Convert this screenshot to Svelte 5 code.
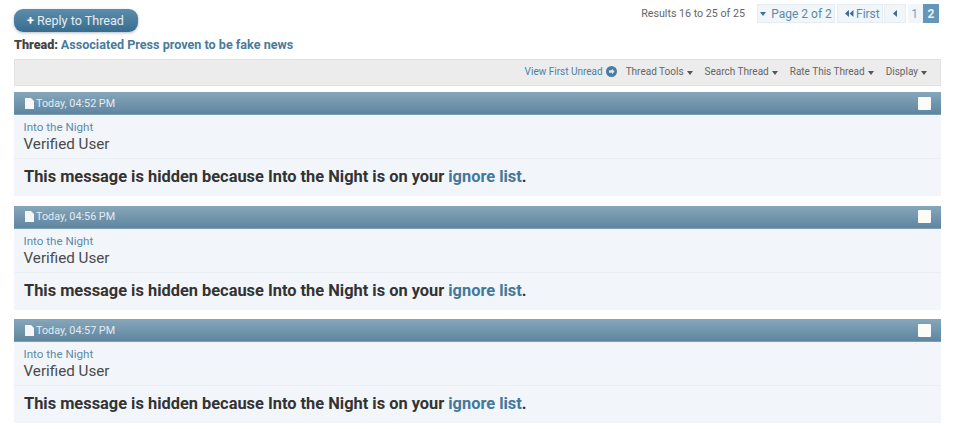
<script>
  const posts = ['Today, 04:52 PM', 'Today, 04:56 PM', 'Today, 04:57 PM'];
  const tools = ['Thread Tools', 'Search Thread', 'Rate This Thread', 'Display'];
</script>

<div class="page">
  <div class="top">
    <button class="reply"><b>+</b> Reply to Thread</button>
    <div class="pager">
      <span class="results">Results 16 to 25 of 25</span>
      <span class="pg wide"><i class="tri-d"></i>Page 2 of 2</span>
      <span class="pg first"><svg width="9" height="7" viewBox="0 0 9 7"><path d="M4 0v7L0 3.500zM8.500 0v7L4.500 3.500z" fill="#3e6f90"/></svg>First</span>
      <span class="pg prev"><svg width="4" height="7" viewBox="0 0 4 7"><path d="M4 0v7L0 3.500z" fill="#3e6f90"/></svg></span>
      <span class="pg num">1</span>
      <span class="pg cur">2</span>
    </div>
  </div>

  <div class="title"><b>Thread:</b> <a href="#t">Associated Press proven to be fake news</a></div>

  <div class="toolbar">
    <a class="unread" href="#u">View First Unread</a>
    <svg class="go" width="11" height="11" viewBox="0 0 11 11"><circle cx="5.500" cy="5.500" r="5.500" fill="#4a7da0"/><path d="M3 4.200h3V2.800l2.500 2.700L6 8.200V6.800H3z" fill="#dfe9f0"/></svg>
    {#each tools as t}
      <span class="tool">{t}<i class="tri-t"></i></span>
    {/each}
  </div>

  {#each posts as p}
    <section class="post">
      <header class="head">
        <svg width="9" height="11" viewBox="0 0 9 11"><path d="M0 0h6l3 3v8H0z" fill="#f4f6f8"/></svg>
        <span>{p}</span>
        <i class="check"></i>
      </header>
      <div class="user">
        <a href="#n">Into the Night</a>
        <div class="rank">Verified User</div>
      </div>
      <div class="msg">This message is hidden because Into the Night is on your <a href="#i">ignore list</a>.</div>
    </section>
  {/each}
</div>

<style>
  :global(body) { margin: 0; background: #fff; }
  .page {
    font-family: Roboto, "Liberation Sans", sans-serif;
    width: 927px;
    height: 429px;
    overflow: hidden;
    padding: 9px 14px 0;
    color: #333;
  }
  a { color: #3e7396; text-decoration: none; }
  .top { display: flex; justify-content: space-between; align-items: flex-start; height: 24px; }
  .reply {
    width: 124px;
    height: 23px;
    border: 0;
    border-radius: 9px;
    background: linear-gradient(#5d8cab 0%, #386d90 100%);
    box-shadow: 0 1px 3px rgba(60, 90, 110, .4);
    color: #e4edf3;
    font: 12.600px Roboto, sans-serif;
    padding: 0 1px 0 0;
  }
  .reply b { font-weight: 700; color: #fff; }
  .pager { display: flex; align-items: center; gap: 2px; height: 19px; margin-top: -5px; margin-right: 2px; }
  .results { font-size: 10.700px; color: #666; margin-right: 10px; }
  .pg {
    height: 19px;
    display: flex;
    align-items: center;
    justify-content: center;
    box-sizing: border-box;
    background: #f1f6fa;
    border: 1px solid #e5edf3;
    color: #5c8aa8;
    font-size: 12px;
  }
  .wide { width: 78px; gap: 5px; }
  .tri-d { width: 0; height: 0; border: 3.500px solid transparent; border-top: 4px solid #3e6f90; border-bottom: 0; }
  .first { width: 46px; gap: 2px; justify-content: flex-start; padding-left: 7px; }
  .prev { width: 22px; margin-left: -1px; }
  .num { width: 15px; border: 0; color: #7fa3bb; padding-right: 2px; }
  .cur { width: 16px; margin-left: -2px; border: 0; background: #6496b8; color: #e8f1f6; font-weight: 700; }
  .title { font-size: 12.600px; font-weight: 700; line-height: 14px; margin-top: 5px; height: 14px; color: #444; word-spacing: -0.500px; }
  .title a { color: #4a7b9b; word-spacing: 0; }
  .toolbar {
    display: flex;
    align-items: center;
    justify-content: flex-end;
    box-sizing: border-box;
    height: 27px;
    margin-top: 7px;
    padding: 0 13px 2px 0;
    background: #ececec;
    border: 1px solid #e2e2e2;
    font-size: 10px;
    color: #666;
  }
  .unread { color: #4e80a2; }
  .go { margin-left: 3px; margin-right: 9px; }
  .tool { margin-left: 12px; display: flex; align-items: center; }
  .go + .tool { margin-left: 0; }
  .tri-t { width: 0; height: 0; margin: 2px 0 0 3px; border: 3.500px solid transparent; border-top: 4px solid #555; border-bottom: 0; }
  .post { margin-top: 6px; height: 104px; margin-bottom: 9.500px; background: #f2f6fa; }
  .head {
    height: 23px;
    display: flex;
    align-items: center;
    gap: 2px;
    padding: 0 10.500px 0 11px;
    background: linear-gradient(#86a7bb, #5f859f);
    border-bottom: 1px solid #7c9fb5;
    box-sizing: border-box;
    color: #e4ebf0;
    font-size: 10.800px;
  }
  .check { width: 13px; height: 13px; margin-left: auto; background: #fbfbf8; border-radius: 1px; }
  .user {
    height: 44px;
    box-sizing: border-box;
    padding: 6px 10px 0 9.500px;
    border-bottom: 1px solid #eaeff3;
    font-size: 11.600px;
    line-height: 13px;
  }
  .user a { color: #5d8aa8; }
  .rank { font-size: 15.200px; line-height: 20px; color: #4a4a4a; }
  .msg { padding: 8px 10px 0; font-size: 16.400px; font-weight: 700; line-height: 20px; color: #333; }
  .msg a { color: #44789b; }
</style>
